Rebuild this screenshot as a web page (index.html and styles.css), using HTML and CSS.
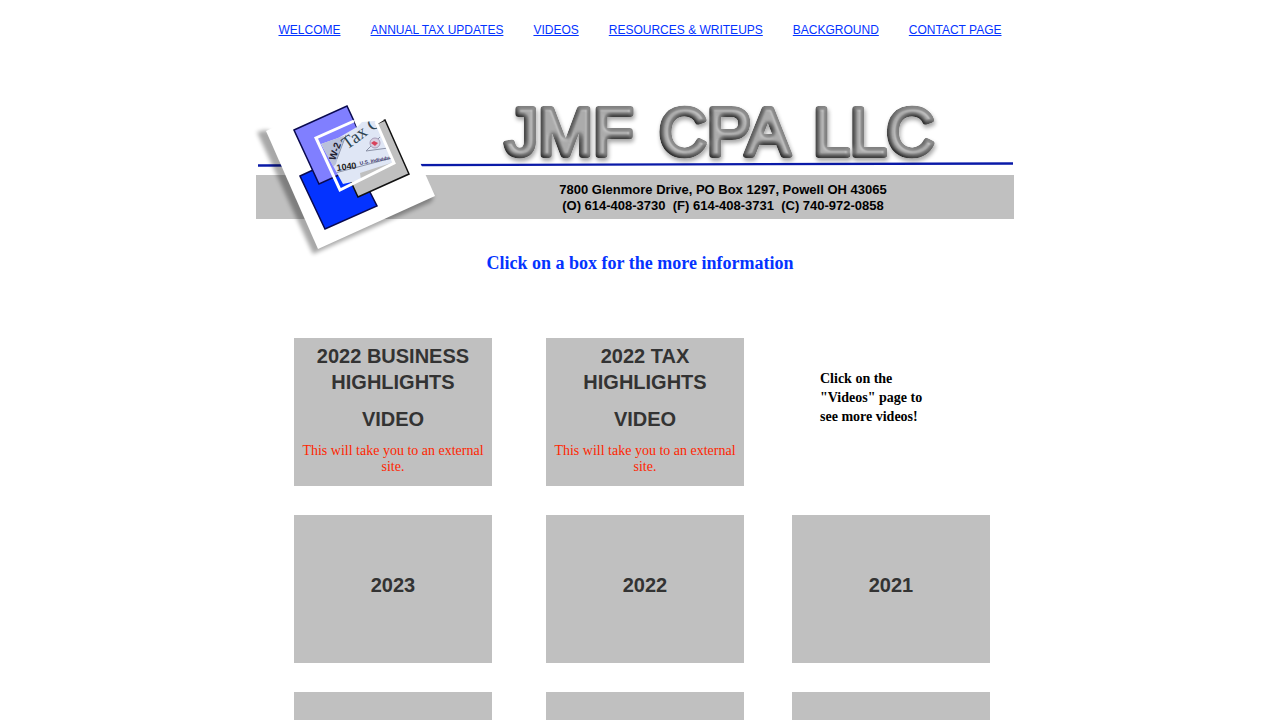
FILE: index.html
```html
<!DOCTYPE html>
<html lang="en-us">
<head>
    <meta charset="utf-8"/>
    <meta name="viewport" content="width=device-width, initial-scale=1"/>
    <title>JMF CPA LLC - Annual Tax Updates</title>
    <link rel="stylesheet" href="styles.css">
</head>
<body>

    <nav class="menu">
        <a href="#welcome">WELCOME</a>
        <a href="#updates">ANNUAL TAX UPDATES</a>
        <a href="#videos">VIDEOS</a>
        <a href="#resources">RESOURCES &amp; WRITEUPS</a>
        <a href="#background">BACKGROUND</a>
        <a href="#contact">CONTACT PAGE</a>
    </nav>

    <header class="banner">
        <svg viewBox="0 0 768 160" role="img" aria-label="JMF CPA LLC">
            <defs>
                <filter id="bevel" x="-5%" y="-20%" width="110%" height="150%">
                    <feGaussianBlur in="SourceAlpha" stdDeviation="2" result="soft"/>
                    <feDiffuseLighting in="soft" surfaceScale="5" diffuseConstant="1.1" lighting-color="#fff" result="shade">
                        <feDistantLight azimuth="310" elevation="62"/>
                    </feDiffuseLighting>
                    <feComposite in="shade" in2="SourceGraphic" operator="arithmetic" k1="0.95" k3="0.05" result="lit"/>
                    <feSpecularLighting in="soft" surfaceScale="4" specularConstant="0.35" specularExponent="25" lighting-color="#fff" result="shine">
                        <feDistantLight azimuth="320" elevation="68"/>
                    </feSpecularLighting>
                    <feComposite in="lit" in2="shine" operator="arithmetic" k2="1" k3="0.7" result="lit"/>
                    <feComposite in="lit" in2="SourceAlpha" operator="in" result="lit"/>
                    <feOffset in="soft" dx="1" dy="3" result="drop"/>
                    <feComponentTransfer in="drop" result="drop">
                        <feFuncA type="linear" slope="0.35"/>
                    </feComponentTransfer>
                    <feMerge>
                        <feMergeNode in="drop"/>
                        <feMergeNode in="lit"/>
                    </feMerge>
                </filter>
                <filter id="blur" x="-10%" y="-10%" width="120%" height="120%">
                    <feGaussianBlur stdDeviation="2"/>
                </filter>
                <clipPath id="forms">
                    <path d="M65 44 L82 38 L101 27 L106 22 L119 21 L138 62 L104 73 L105 80 L87 84 Z"/>
                </clipPath>
            </defs>

            <rect x="0" y="75" width="758" height="44" fill="#c0c0c0"/>
            <path d="M2 65.5 L757 63.5" stroke="#0a1aa8" stroke-width="2.4"/>

            <!-- sheet of paper and its shadow -->
            <path d="M1 32 L10 30 L178 96 L175 102 L57 154 Z" fill="#000" opacity="0.34" filter="url(#blur)"/>
            <path d="M10 31 L62 149 L179 96 L126 -23 Z" fill="#fff"/>

            <g stroke="#0a0a50" stroke-width="1.5">
                <path d="M44 76 L94 53 L121 106 L69 129 Z" fill="#0433ff"/>
                <path d="M38 30 L91 6 L116 60 L63 84 Z" fill="#807fff"/>
                <path d="M129 20 L153 74 L102 97 L77 43 Z" fill="#c0c0c0" stroke="#111"/>
            </g>
            <path d="M98 20 L128 20 L104 35 Z" fill="#fff"/>

            <!-- tax forms -->
            <g clip-path="url(#forms)">
                <rect x="58" y="18" width="84" height="70" fill="#dfe6f5"/>
                <path d="M65 42 L88 36 L80 64 L74 70 Z" fill="#b9c1da"/>
                <path d="M90 35 L81 59 M110 51 L124 37 M110 51 L132 48 M79 73 L136 58" stroke="#8c93a8" stroke-width="1" fill="none"/>
                <circle cx="119" cy="43" r="5" fill="#d8cfe0" stroke="#a89cb8" stroke-width="1"/>
                <path d="M115 43 L118 41 L122 43 L119 46 Z" fill="#d8425c"/>
                <text class="form-w2" transform="translate(79 61) rotate(-70)">W-2</text>
                <text class="form-tax" transform="translate(91 50) rotate(-36)">Tax C</text>
                <text class="form-1040" transform="translate(81 71) rotate(-8)">1040</text>
                <text class="form-small" transform="translate(104 65) rotate(-11)">U.S. Individual</text>
            </g>
            <path d="M98 21 L60 38 L84 90 L138 63 L120 22" fill="none" stroke="#fff" stroke-width="3"/>

            <g class="wordmark" filter="url(#bevel)">
                <text x="249" y="55">JMF</text>
                <text x="403" y="55">CPA</text>
                <text x="557" y="55">LLC</text>
            </g>

            <text class="address" x="467" y="94">7800 Glenmore Drive, PO Box 1297, Powell OH 43065</text>
            <text class="address" x="467" y="110">(O) 614-408-3730&#160; (F) 614-408-3731&#160; (C) 740-972-0858</text>
        </svg>
    </header>

    <main>
        <h1>Click on a box for the more information</h1>

        <div class="boxes">
            <a class="box video" href="#business-video">
                <h2>2022 BUSINESS HIGHLIGHTS</h2>
                <h2>VIDEO</h2>
                <p>This will take you to an external site.</p>
            </a>
            <a class="box video" href="#tax-video">
                <h2>2022 TAX HIGHLIGHTS</h2>
                <h2>VIDEO</h2>
                <p>This will take you to an external site.</p>
            </a>
            <p class="note">Click on the "Videos" page to see more videos!</p>

            <a class="box" href="#2023"><h2>2023</h2></a>
            <a class="box" href="#2022"><h2>2022</h2></a>
            <a class="box" href="#2021"><h2>2021</h2></a>

            <div class="box"></div>
            <div class="box"></div>
            <div class="box"></div>
        </div>
    </main>

</body>
</html>
```
FILE: styles.css
```css
body {
    margin: 0;
    background-color: #fff;
    font-family: "Liberation Serif", serif;
}

h1, h2, p {
    margin: 0;
}

/* menu */

.menu {
    display: flex;
    flex-wrap: wrap;
    justify-content: center;
    gap: 10px 30px;
    padding-top: 22px;
    font: 12px/16px "Liberation Sans", sans-serif;
}

.menu a {
    color: #0433ff;
}

/* banner */

.banner {
    max-width: 768px;
    margin: 62px auto 0;
}

.banner svg {
    display: block;
    width: 100%;
    overflow: visible;
}

.wordmark {
    font: 66px "Liberation Sans", sans-serif;
    fill: #8c8c8c;
    stroke: #8c8c8c;
    stroke-width: 6px;
    stroke-linejoin: round;
}

.address {
    font: bold 13px "Liberation Sans", sans-serif;
    text-anchor: middle;
}

.form-w2 {
    font: bold 10px "Liberation Sans", sans-serif;
    fill: #223;
}

.form-tax {
    font: 18px "Liberation Serif", serif;
    fill: #2c4450;
}

.form-1040 {
    font: bold 9px "Liberation Sans", sans-serif;
    fill: #222;
}

.form-small {
    font: bold 5px "Liberation Sans", sans-serif;
    fill: #336;
}

/* boxes */

main {
    max-width: 768px;
    margin: 0 auto;
}

h1 {
    margin-top: -7px;
    padding-bottom: 65px;
    color: #0433ff;
    font-size: 18px;
    line-height: 20px;
    text-align: center;
}

.boxes {
    display: grid;
    grid-template-columns: 252px 246px 198px;
    row-gap: 29px;
    padding: 0 0 30px 38px;
}

.box {
    display: flex;
    flex-direction: column;
    justify-content: center;
    box-sizing: border-box;
    width: 198px;
    height: 148px;
    padding-bottom: 8px;
    background-color: #c0c0c0;
    color: #333;
    text-align: center;
    text-decoration: none;
}

.box h2 {
    font: bold 20px/26px "Liberation Sans", sans-serif;
}

.video {
    justify-content: flex-start;
    gap: 11px;
    padding: 5px 4px 0;
}

.video p {
    color: #ff2600;
    font-size: 14px;
    line-height: 16px;
}

.note {
    width: 110px;
    padding: 31px 28px 0;
    font-size: 14px;
    font-weight: bold;
    line-height: 19px;
}
```
